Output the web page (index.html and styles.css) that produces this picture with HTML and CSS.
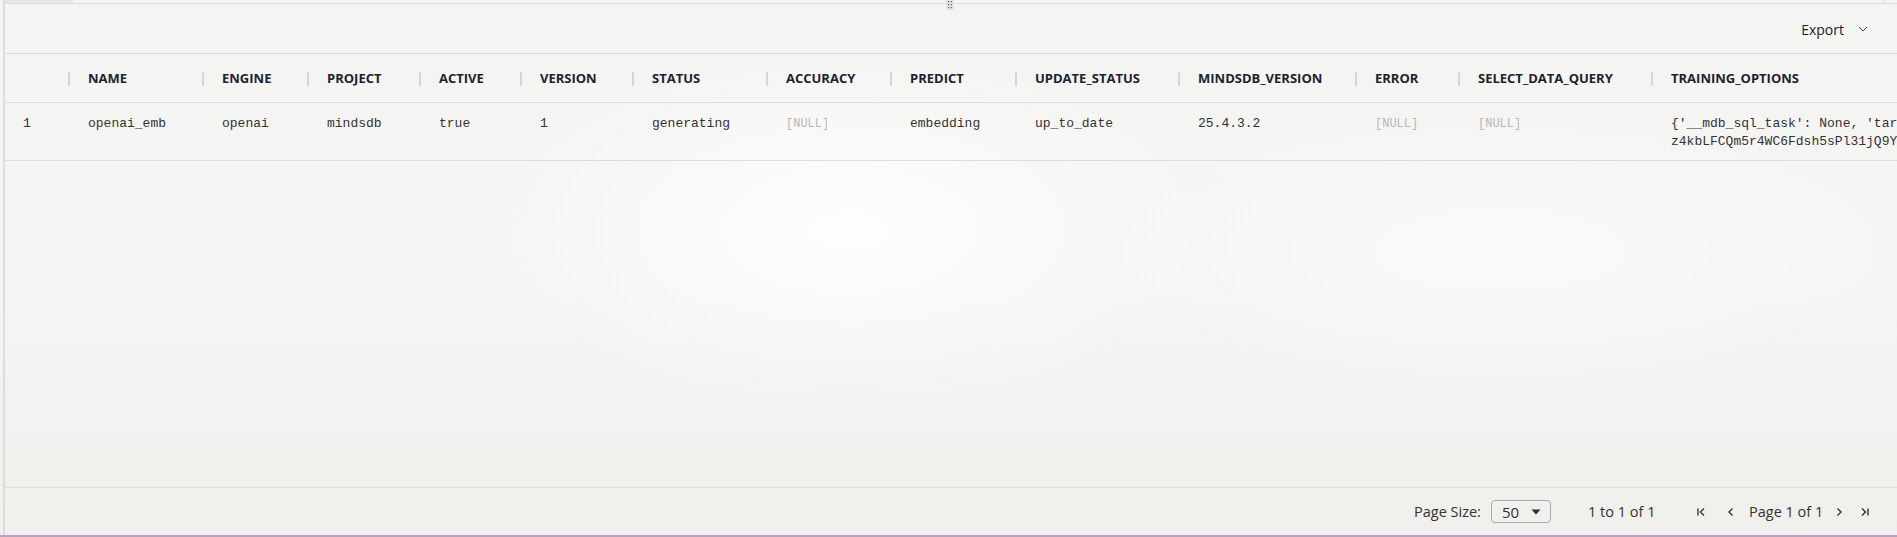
FILE: index.html
```html
<!DOCTYPE html>
<html>
<head>
<meta charset="utf-8">
<link rel="stylesheet" href="styles.css">
</head>
<body>
<div class="app">
  <div class="panel">
    <div class="topbar">
      <div class="tab"></div>
      <div class="topbar-fill"></div>
      <div class="topbar-end"></div>
    </div>
    <div class="toolbar">
      <button class="export">Export
        <svg class="chev" width="10" height="6" viewBox="0 0 10 6"><path d="M1 1 L5 5 L9 1" fill="none" stroke="#444" stroke-width="1"/></svg>
      </button>
    </div>
    <div class="grid-head cols">
      <div class="hcell"><span></span><i class="sep"></i></div>
      <div class="hcell"><span>NAME</span><i class="sep"></i></div>
      <div class="hcell"><span>ENGINE</span><i class="sep"></i></div>
      <div class="hcell"><span>PROJECT</span><i class="sep"></i></div>
      <div class="hcell"><span>ACTIVE</span><i class="sep"></i></div>
      <div class="hcell"><span>VERSION</span><i class="sep"></i></div>
      <div class="hcell"><span>STATUS</span><i class="sep"></i></div>
      <div class="hcell"><span>ACCURACY</span><i class="sep"></i></div>
      <div class="hcell"><span>PREDICT</span><i class="sep"></i></div>
      <div class="hcell"><span>UPDATE_STATUS</span><i class="sep"></i></div>
      <div class="hcell"><span>MINDSDB_VERSION</span><i class="sep"></i></div>
      <div class="hcell"><span>ERROR</span><i class="sep"></i></div>
      <div class="hcell"><span>SELECT_DATA_QUERY</span><i class="sep"></i></div>
      <div class="hcell"><span>TRAINING_OPTIONS</span></div>
    </div>
    <div class="grid-row cols">
      <div class="cell">1</div>
      <div class="cell">openai_emb</div>
      <div class="cell">openai</div>
      <div class="cell">mindsdb</div>
      <div class="cell">true</div>
      <div class="cell">1</div>
      <div class="cell">generating</div>
      <div class="cell null">[NULL]</div>
      <div class="cell">embedding</div>
      <div class="cell">up_to_date</div>
      <div class="cell">25.4.3.2</div>
      <div class="cell null">[NULL]</div>
      <div class="cell null">[NULL]</div>
      <div class="cell wide">
        <div class="line">{'__mdb_sql_task': None, 'target': 'embedding', 'using': {'engine': 'openai', 'mode': 'embedding', 'api_key': 'sk-proj-</div>
        <div class="line">z4kbLFCQm5r4WC6Fdsh5sPl31jQ9Y', 'question_column': 'content'}}</div>
      </div>
    </div>
    <div class="spacer"></div>
    <div class="footer">
      <span class="ps-label">Page Size:</span>
      <div class="select"><span>50</span><svg width="10" height="6" viewBox="0 0 10 6"><path d="M0.5 0.5 L9.5 0.5 L5 5.5 Z" fill="#333"/></svg></div>
      <span class="summary">1 to 1 of 1</span>
      <svg class="pg first" width="12" height="12" viewBox="0 0 12 12"><path d="M3 2.5 V9.5 M9 2.5 L5.5 6 L9 9.5" fill="none" stroke="#333" stroke-width="1.4"/></svg>
      <svg class="pg prev" width="12" height="12" viewBox="0 0 12 12"><path d="M7.5 2.5 L4 6 L7.5 9.5" fill="none" stroke="#333" stroke-width="1.4"/></svg>
      <span class="pageinfo">Page 1 of 1</span>
      <svg class="pg next" width="12" height="12" viewBox="0 0 12 12"><path d="M4.5 2.5 L8 6 L4.5 9.5" fill="none" stroke="#333" stroke-width="1.4"/></svg>
      <svg class="pg last" width="12" height="12" viewBox="0 0 12 12"><path d="M3 2.5 L6.5 6 L3 9.5 M9 2.5 V9.5" fill="none" stroke="#333" stroke-width="1.4"/></svg>
    </div>
  </div>
  <div class="grip">
    <svg width="8" height="10" viewBox="0 0 8 10"><g fill="#666"><rect x="2" y="1" width="1.2" height="1.2"/><rect x="4.8" y="1" width="1.2" height="1.2"/><rect x="2" y="4" width="1.2" height="1.2"/><rect x="4.8" y="4" width="1.2" height="1.2"/><rect x="2" y="7" width="1.2" height="1.2"/><rect x="4.8" y="7" width="1.2" height="1.2"/></g></svg>
  </div>
</div>
<div class="accent"></div>
</body>
</html>
```
FILE: styles.css
```css
html, body {
  margin: 0;
  padding: 0;
}
body {
  width: 1897px;
  height: 537px;
  overflow: hidden;
  background:
    radial-gradient(ellipse 520px 260px at 850px 230px, rgba(255,255,255,0.85), rgba(255,255,255,0) 70%),
    radial-gradient(ellipse 600px 200px at 1500px 250px, rgba(255,255,255,0.5), rgba(255,255,255,0) 70%),
    linear-gradient(180deg, #f4f4f2 0%, #f5f5f3 50%, #efefec 100%);
  font-family: "Open Sans", "Liberation Sans", sans-serif;
  color: #2a2a2a;
}
.app {
  position: relative;
  height: 535px;
  display: flex;
  padding-left: 3px;
}
.panel {
  flex: 1;
  min-width: 0;
  display: flex;
  flex-direction: column;
  border-left: 2px solid #dcdcd9;
  overflow: hidden;
}
.topbar {
  height: 3px;
  display: flex;
  border-bottom: 1px solid #dcdcda;
  flex-shrink: 0;
}
.tab {
  width: 68px;
  background: #e7e7e5;
}
.topbar-fill {
  flex: 1;
}
.topbar-end {
  width: 12px;
  border-left: 1px solid #d8d8d6;
}
.toolbar {
  height: 49px;
  flex-shrink: 0;
  border-bottom: 1px solid #dcdcda;
  display: flex;
  align-items: center;
  justify-content: flex-end;
  padding-right: 29px;
}
.export {
  border: none;
  background: transparent;
  font-family: "Open Sans", "Liberation Sans", sans-serif;
  font-size: 14px;
  color: #222;
  display: flex;
  align-items: center;
  gap: 14px;
  padding: 0;
  margin-top: 2px;
}
.chev {
  margin-top: -2px;
}
.cols {
  display: grid;
  grid-template-columns: 65px 134px 105px 112px 101px 112px 134px 124px 125px 163px 177px 103px 193px 1200px;
  flex-shrink: 0;
}
.grid-head {
  height: 48px;
  border-bottom: 1px solid #dcdcda;
}
.hcell {
  display: flex;
  align-items: center;
  justify-content: space-between;
  padding-left: 18px;
  font-weight: 700;
  font-size: 13px;
  color: #1d2230;
  white-space: nowrap;
}
.sep {
  width: 2px;
  height: 14px;
  background: #d6d6d4;
  margin-right: 0;
  margin-top: 1px;
}
.grid-row {
  height: 57px;
  border-bottom: 1px solid #dcdcda;
}
.cell {
  padding: 12px 0 0 18px;
  font-family: "Liberation Mono", "DejaVu Sans Mono", monospace;
  font-size: 13px;
  line-height: 18px;
  color: #333;
  white-space: nowrap;
  overflow: hidden;
}
.cell.null {
  color: #b8b8b6;
  font-size: 12px;
}
.line {
  white-space: nowrap;
}
.spacer {
  flex: 1;
}
.footer {
  height: 47px;
  flex-shrink: 0;
  border-top: 1px solid #dcdcda;
  display: flex;
  align-items: center;
  justify-content: flex-end;
  padding-right: 26px;
  font-size: 14.5px;
  color: #333;
}
.ps-label {
  width: 77px;
}
.select {
  width: 58px;
  height: 21px;
  border: 1px solid #aaaaaa;
  border-radius: 4px;
  display: flex;
  align-items: center;
  justify-content: space-between;
  padding: 0 9px 0 10px;
  box-sizing: border-box;
  width: 60px;
  height: 23px;
  font-size: 15px;
}
.summary {
  margin-left: 37px;
  width: 107px;
}
.pg {
  flex-shrink: 0;
}
.prev {
  margin-left: 18px;
}
.pageinfo {
  margin-left: 12px;
  width: 84px;
}
.last {
  margin-left: 14px;
}
.grip {
  position: absolute;
  left: 946px;
  top: 0;
  width: 8px;
  height: 10px;
  background: #e2e2e1;
  border-radius: 0 0 2px 2px;
  display: flex;
}
.accent {
  height: 2px;
  background: #c597c9;
}
```
